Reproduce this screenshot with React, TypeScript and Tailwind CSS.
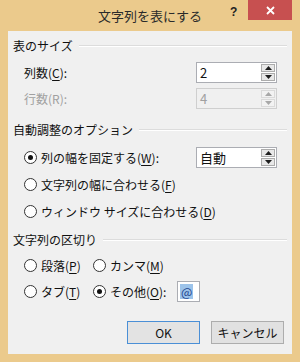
import React from "react";

const font = { fontFamily: '"Noto Sans CJK JP", "Noto Sans", sans-serif' };

function U({ children }: { children: React.ReactNode }) {
  return <span className="underline underline-offset-[2px] decoration-[1px]">{children}</span>;
}

function SpinBox({ value, disabled }: { value: string; disabled?: boolean }) {
  const tri = disabled ? "#a8a8a8" : "#1e1e1e";
  return (
    <div
      className={`w-[81px] h-[21px] border flex ${
        disabled ? "border-[#cfcfcf] bg-[#f0f0f0]" : "border-[#abadb3] bg-white"
      }`}
    >
      <div
        className={`flex-1 pl-[3px] flex items-center text-[13px] leading-none ${
          disabled ? "text-[#a0a0a0]" : "text-[#111]"
        }`}
      >
        {value}
      </div>
      <div className="w-[15px] flex flex-col gap-[1px] py-[1px] pr-[1px]">
        <div
          className={`flex-1 border flex items-center justify-center ${
            disabled ? "border-[#dadada] bg-[#f2f2f2]" : "border-[#acacac] bg-[#e8e8e8]"
          }`}
        >
          <svg width="7" height="4" viewBox="0 0 7 4">
            <path d="M0 4 L3.5 0 L7 4 Z" fill={tri} />
          </svg>
        </div>
        <div
          className={`flex-1 border flex items-center justify-center ${
            disabled ? "border-[#dadada] bg-[#f2f2f2]" : "border-[#acacac] bg-[#e8e8e8]"
          }`}
        >
          <svg width="7" height="4" viewBox="0 0 7 4">
            <path d="M0 0 L3.5 4 L7 0 Z" fill={tri} />
          </svg>
        </div>
      </div>
    </div>
  );
}

function Radio({ checked, children }: { checked?: boolean; children: React.ReactNode }) {
  return (
    <div className="flex items-center h-[21px]">
      <div className="w-[13px] h-[13px] rounded-full border border-[#333] bg-white flex items-center justify-center">
        {checked && <div className="w-[5px] h-[5px] rounded-full bg-[#111]" />}
      </div>
      <span className="ml-[4px] text-[12px] leading-none text-[#111] whitespace-nowrap">{children}</span>
    </div>
  );
}

function Header({ children }: { children: React.ReactNode }) {
  return (
    <div className="flex items-center h-[16px] pl-[5px] pr-[5px] gap-[6px]">
      <span className="text-[12px] leading-none text-[#111] whitespace-nowrap">{children}</span>
      <div className="flex-1 h-[2px] border-t border-[#dcdcdc] border-b-white border-b" />
    </div>
  );
}

export default function App() {
  return (
    <div className="w-[300px] h-[362px] bg-[#ebca8c] flex flex-col" style={font}>
      <div className="h-[31px] relative shrink-0">
        <div className="absolute inset-x-0 top-[7px] text-center text-[13px] leading-[18px] text-[#2a2a2a]">
          文字列を表にする
        </div>
        <div className="absolute left-[230px] top-[5px] text-[12px] font-bold leading-[14px] text-[#222]" style={{ fontFamily: '"Liberation Sans", sans-serif' }}>
          ?
        </div>
        <div className="absolute left-[248px] top-0 w-[44px] h-[20px] bg-[#c75050] flex items-center justify-center">
          <svg width="9" height="9" viewBox="0 0 9 9">
            <path d="M1 1 L8 8 M8 1 L1 8" stroke="#fff" strokeWidth="1.8" />
          </svg>
        </div>
      </div>
      <div className="mx-[8px] mb-[8px] flex-1 bg-[#f0f0f0] flex flex-col pt-[7px]">
        <Header>表のサイズ</Header>
        <div className="mt-[8px] h-[21px] flex items-center pl-[16px]">
          <span className="w-[172px] text-[12px] leading-none text-[#111]">
            列数(<U>C</U>):
          </span>
          <SpinBox value="2" />
        </div>
        <div className="mt-[5px] h-[21px] flex items-center pl-[16px]">
          <span className="w-[172px] text-[12px] leading-none text-[#a0a0a0]">行数(R):</span>
          <SpinBox value="4" disabled />
        </div>

        <div className="mt-[13px]">
          <Header>自動調整のオプション</Header>
        </div>
        <div className="mt-[9px] h-[21px] flex items-center pl-[16px]">
          <div className="w-[172px]">
            <Radio checked>
              列の幅を固定する(<U>W</U>):
            </Radio>
          </div>
          <SpinBox value="自動" />
        </div>
        <div className="mt-[6px] pl-[16px]">
          <Radio>
            文字列の幅に合わせる(<U>F</U>)
          </Radio>
        </div>
        <div className="mt-[6px] pl-[16px]">
          <Radio>
            ウィンドウ サイズに合わせる(<U>D</U>)
          </Radio>
        </div>

        <div className="mt-[10px]">
          <Header>文字列の区切り</Header>
        </div>
        <div className="mt-[7px] flex pl-[16px]">
          <div className="w-[69px]">
            <Radio>
              段落(<U>P</U>)
            </Radio>
          </div>
          <Radio>
            カンマ(<U>M</U>)
          </Radio>
        </div>
        <div className="mt-[5px] flex items-center pl-[16px]">
          <div className="w-[69px]">
            <Radio>
              タブ(<U>T</U>)
            </Radio>
          </div>
          <div className="w-[84px]">
            <Radio checked>
              その他(<U>O</U>):
            </Radio>
          </div>
          <div className="w-[23px] h-[21px] border border-[#abadb3] bg-white flex items-center pl-[2px]">
            <span className="bg-[#9cc3ea] text-[#1b3f8c] text-[12px] leading-[15px] px-[1px]">@</span>
          </div>
        </div>

        <div className="mt-[19px] flex justify-end gap-[11px] pr-[8px]">
          <div className="w-[73px] h-[23px] border border-[#4a8fd6] bg-[#e3e3e3] flex items-center justify-center text-[12px] leading-none text-[#111]">
            OK
          </div>
          <div className="w-[73px] h-[23px] border border-[#adadad] bg-[#e1e1e1] flex items-center justify-center text-[12px] leading-none text-[#111]">
            キャンセル
          </div>
        </div>
      </div>
    </div>
  );
}
